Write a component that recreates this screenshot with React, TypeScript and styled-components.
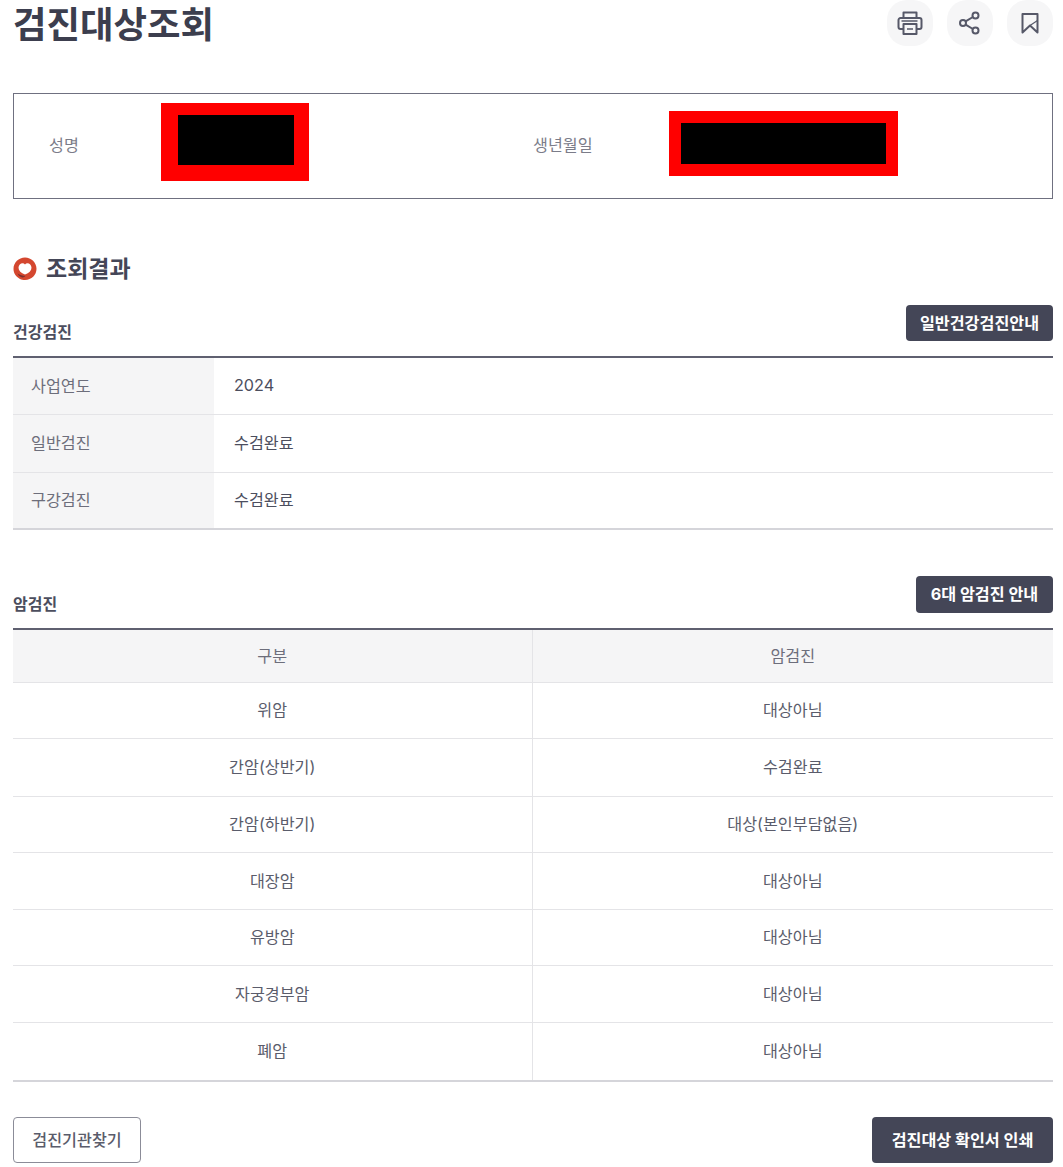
import React from "react";
import styled, { createGlobalStyle } from "styled-components";

const FONT = `Inter, "Noto Sans CJK KR", "Noto Sans", sans-serif`;

const Global = createGlobalStyle`
  html, body { margin: 0; padding: 0; background: #fff; }
  body { font-family: ${FONT}; color: #444657; }
  * { box-sizing: border-box; }
`;

const Page = styled.div`
  width: 1063px;
  height: 1167px;
  overflow: hidden;
  padding: 0 10px 0 13px;
`;
const TitleRow = styled.header`
  display: flex;
  justify-content: space-between;
  align-items: flex-start;
  height: 93px;
`;
const Title = styled.h1`
  margin: 0;
  font-size: 36.4px;
  line-height: 51px;
  font-weight: 700;
  color: #3c3e4e;
`;
const Tools = styled.div`
  display: flex;
  gap: 14px;
`;
const ToolButton = styled.button`
  width: 46px;
  height: 46px;
  padding: 0;
  border: 0;
  border-radius: 20px;
  background: #f6f6f7;
  display: flex;
  align-items: center;
  justify-content: center;
  color: #565868;
`;
const InfoBox = styled.section`
  height: 106px;
  border: 1px solid #6f7080;
  display: grid;
  grid-template-columns: 519px 1fr;
  align-items: center;
`;
const InfoCell = styled.div<{ $labelWidth: number; $pad: number }>`
  display: grid;
  grid-template-columns: ${(p) => p.$labelWidth}px auto;
  justify-content: start;
  align-items: center;
  padding-left: ${(p) => p.$pad}px;
`;
const InfoLabel = styled.span`
  font-size: 16.2px;
  line-height: 24px;
  margin-top: -2px;
  color: #7b7c89;
`;
const Redaction = styled.span<{ $w: number; $h: number; $edges: string; $shift: number }>`
  display: block;
  width: ${(p) => p.$w}px;
  height: ${(p) => p.$h}px;
  border-style: solid;
  border-color: #ff0000;
  border-width: ${(p) => p.$edges};
  background: #000;
  transform: translateY(${(p) => p.$shift}px);
`;
const ResultHead = styled.h2`
  margin: 52px 0 0;
  height: 36px;
  display: flex;
  align-items: center;
  gap: 9px;
  font-size: 23px;
  line-height: 36px;
  font-weight: 700;
  color: #444657;
`;
const SectionHead = styled.div<{ $mt: number; $h: number }>`
  display: flex;
  justify-content: space-between;
  align-items: flex-start;
  margin-top: ${(p) => p.$mt}px;
  height: ${(p) => p.$h}px;
`;
const SectionTitle = styled.h3<{ $top: number }>`
  margin: ${(p) => p.$top}px 0 0;
  font-size: 16px;
  line-height: 24px;
  font-weight: 700;
  color: #4c4e5e;
`;
const DarkButton = styled.button<{ $w: number; $h: number }>`
  width: ${(p) => p.$w}px;
  height: ${(p) => p.$h}px;
  padding: 0 0 3px;
  border: 0;
  border-radius: 4px;
  background: #444657;
  color: #fff;
  font: 700 16.2px ${FONT};
`;
const Table = styled.table`
  width: 100%;
  border-collapse: collapse;
  table-layout: fixed;
  border-top: 2px solid #5f6070;
  border-bottom: 2px solid #d5d5da;
  font-size: 16.2px;
`;
const RowHeader = styled.th`
  width: 201px;
  padding: 0 0 2px 18px;
  background: #f5f5f6;
  font-weight: 400;
  text-align: left;
  color: #6d6e7b;
`;
const RowValue = styled.td`
  padding: 0 0 2px 20px;
  color: #4c4e5e;
`;
const BasicRow = styled.tr<{ $h: number }>`
  height: ${(p) => p.$h}px;
  & + & { border-top: 1px solid #e4e4e7; }
`;
const ColHeader = styled.th`
  padding-bottom: 3px;
  background: #f5f5f6;
  font-weight: 400;
  color: #6d6e7b;
  text-align: center;
  &:first-child { width: 519px; }
  & + & { border-left: 1px solid #e4e4e7; }
`;
const CancerRow = styled.tr<{ $h: number }>`
  height: ${(p) => p.$h}px;
  border-top: 1px solid #e4e4e7;
`;
const Cell = styled.td`
  padding-bottom: 3px;
  text-align: center;
  color: #5a5c6b;
  & + & { border-left: 1px solid #e4e4e7; }
`;
const Footer = styled.div`
  display: flex;
  justify-content: space-between;
  margin-top: 35px;
`;
const OutlineButton = styled.button`
  width: 128px;
  height: 46px;
  padding: 0 0 3px;
  border: 1px solid #8b8c98;
  border-radius: 4px;
  background: #fff;
  color: #5a5c6b;
  font: 500 16.2px ${FONT};
`;

const cancerRows: [string, string, number][] = [
  ["위암", "대상아님", 56],
  ["간암(상반기)", "수검완료", 58],
  ["간암(하반기)", "대상(본인부담없음)", 56],
  ["대장암", "대상아님", 57],
  ["유방암", "대상아님", 56],
  ["자궁경부암", "대상아님", 57],
  ["폐암", "대상아님", 59],
];

const basicRows: [string, string, number][] = [
  ["사업연도", "2024", 57],
  ["일반검진", "수검완료", 58],
  ["구강검진", "수검완료", 57],
];

export default function App() {
  return (
    <Page>
      <Global />
      <TitleRow>
        <Title>검진대상조회</Title>
        <Tools>
          <ToolButton aria-label="인쇄">
            <svg width="28" height="28" viewBox="0 0 28 28" fill="none" stroke="currentColor" strokeWidth="2" strokeLinejoin="round">
              <path d="M7.5 9V3.5h13V9" />
              <path d="M7.5 20H4.500a2 2 0 0 1-2-2v-7a2 2 0 0 1 2-2h19a2 2 0 0 1 2 2v7a2 2 0 0 1-2 2h-3" />
              <path d="M7.5 15h13v10h-13z" />
              <path d="M11 20h6M5.500 12h16" strokeWidth="1.5" />
            </svg>
          </ToolButton>
          <ToolButton aria-label="공유">
            <svg width="24" height="24" viewBox="0 0 24 24" fill="none" stroke="currentColor" strokeWidth="2">
              <circle cx="17.5" cy="4.5" r="3" />
              <circle cx="5" cy="12" r="3" />
              <circle cx="17.5" cy="19.5" r="3" />
              <path d="M7.6 10.4l7.3-4.4M7.6 13.6l7.3 4.4" />
            </svg>
          </ToolButton>
          <ToolButton aria-label="북마크">
            <svg width="20" height="24" viewBox="0 0 20 24" fill="none" stroke="currentColor" strokeWidth="2" strokeLinejoin="round">
              <path d="M2.500 3h15v18.500l-7.500-7-7.500 7z" />
              <path d="M10 14.500l7.500-5" strokeWidth="1.2" />
            </svg>
          </ToolButton>
        </Tools>
      </TitleRow>

      <InfoBox>
        <InfoCell $labelWidth={112} $pad={35}>
          <InfoLabel>성명</InfoLabel>
          <Redaction $w={148} $h={78} $edges="12px 15px 16px 17px" $shift={-4} />
        </InfoCell>
        <InfoCell $labelWidth={136} $pad={0}>
          <InfoLabel>생년월일</InfoLabel>
          <Redaction $w={229} $h={65} $edges="12px" $shift={-3} />
        </InfoCell>
      </InfoBox>

      <ResultHead>
        <svg width="24" height="24" viewBox="0 0 24 24">
          <path d="M12 .5C18.300.5 23.500 5.500 23.500 11.800S18.500 23 12 23c-2 0-3.500-.3-5-1.100C3 20 .5 16.300.5 11.800.5 5.500 5.700.5 12 .5z" fill="#d4472f" />
          <path d="M12 17.500c-4-1.500-6.500-3.800-6.500-6.800C5.500 8 7.500 6.200 9.600 6.200c.9 0 1.800.4 2.400 1.200.6-.8 1.500-1.200 2.400-1.200 2.100 0 4.100 1.800 4.100 4.500 0 3-2.500 5.300-6.500 6.800z" fill="#fff" />
          <path d="M4.500 16.500c2.500 1.500 5 2.300 8 2.300-1 1.400-2.500 1.900-4 1.400-2-.7-3.300-2.200-4-3.700z" fill="#7a3030" />
        </svg>
        조회결과
      </ResultHead>

      <SectionHead $mt={18} $h={51}>
        <SectionTitle $top={15}>건강검진</SectionTitle>
        <DarkButton $w={147} $h={36}>일반건강검진안내</DarkButton>
      </SectionHead>
      <Table>
        <tbody>
          {basicRows.map(([k, v, h]) => (
            <BasicRow key={k} $h={h}>
              <RowHeader>{k}</RowHeader>
              <RowValue>{v}</RowValue>
            </BasicRow>
          ))}
        </tbody>
      </Table>

      <SectionHead $mt={46} $h={52}>
        <SectionTitle $top={16}>암검진</SectionTitle>
        <DarkButton $w={137} $h={37}>6대 암검진 안내</DarkButton>
      </SectionHead>
      <Table>
        <thead>
          <BasicRow $h={53}>
            <ColHeader>구분</ColHeader>
            <ColHeader>암검진</ColHeader>
          </BasicRow>
        </thead>
        <tbody>
          {cancerRows.map(([k, v, h]) => (
            <CancerRow key={k} $h={h}>
              <Cell>{k}</Cell>
              <Cell>{v}</Cell>
            </CancerRow>
          ))}
        </tbody>
      </Table>

      <Footer>
        <OutlineButton>검진기관찾기</OutlineButton>
        <DarkButton $w={181} $h={46}>검진대상 확인서 인쇄</DarkButton>
      </Footer>
    </Page>
  );
}
